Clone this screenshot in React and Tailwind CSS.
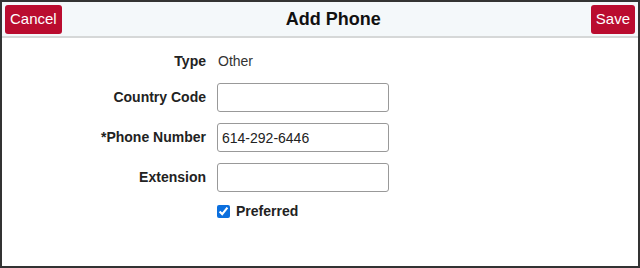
export default function App() {
  const rows = [
    { label: 'Country Code', value: '', mt: 'mt-[9px]' },
    { label: '*Phone Number', value: '614-292-6446', mt: 'mt-[11px]' },
    { label: 'Extension', value: '', mt: 'mt-[11px]' },
  ];

  return (
    <div
      className="h-[268px] w-[640px] overflow-hidden border-2 border-[#333] bg-white text-[#222]"
      style={{ fontFamily: '"Liberation Sans", Arial, sans-serif' }}
    >
      <header className="flex h-[36px] items-center border-b-2 border-[#d6d8d8] bg-[#f4f8fa] px-[3px]">
        <button className="h-[29px] rounded-[3px] bg-[#ba0c2f] px-[5px] text-[15px] text-white">
          Cancel
        </button>
        <h1 className="flex-1 pl-[14px] text-center text-[18px] font-bold text-[#111]">
          Add Phone
        </h1>
        <button className="h-[29px] rounded-[3px] bg-[#ba0c2f] px-[5px] text-[15px] text-white">
          Save
        </button>
      </header>

      <div className="pt-[10px]">
        <div className="flex h-[26px] items-center">
          <div className="w-[204px] text-right text-[14px] font-bold">Type</div>
          <div className="pl-[12px] text-[14px] text-[#333]">Other</div>
        </div>

        {rows.map((r) => (
          <div key={r.label} className={`${r.mt} flex h-[29px] items-center`}>
            <label className="w-[204px] text-right text-[14px] font-bold">{r.label}</label>
            <div className="pl-[11px]">
              <input
                defaultValue={r.value}
                className="h-[29px] w-[172px] rounded-[3px] border border-[#999] px-[4px] text-[14px] text-[#222] outline-none"
              />
            </div>
          </div>
        ))}

        <div className="mt-[9px] flex h-[20px] items-center pl-[215px]">
          <input type="checkbox" defaultChecked className="h-[13px] w-[13px] accent-[#0b6fde]" />
          <span className="pl-[6px] text-[14px] font-bold">Preferred</span>
        </div>
      </div>
    </div>
  );
}
